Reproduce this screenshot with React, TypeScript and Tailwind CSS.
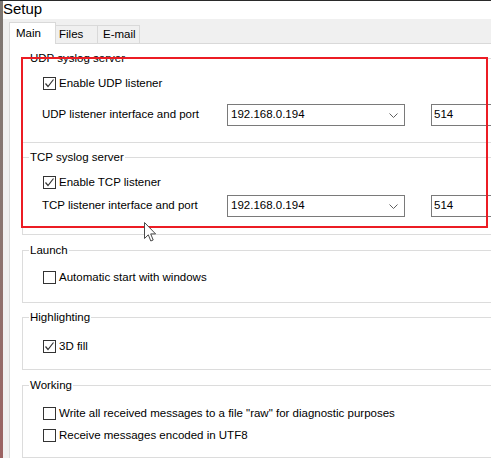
import React from 'react';

function Check({ checked = false }: { checked?: boolean }) {
  return (
    <span className="flex h-[13px] w-[13px] shrink-0 items-center justify-center border border-[#333333] bg-white">
      {checked && (
        <svg width="11" height="11" viewBox="0 0 11 11" fill="none">
          <polyline points="1.5,5.5 4,8.5 9.5,1.5" stroke="#333333" strokeWidth="1.2" />
        </svg>
      )}
    </span>
  );
}

function CheckRow({ label, checked, className = '' }: { label: string; checked?: boolean; className?: string }) {
  return (
    <div className={`flex h-[13px] items-center gap-[3px] ${className}`}>
      <Check checked={checked} />
      <span className="whitespace-nowrap">{label}</span>
    </div>
  );
}

function Group({ title, className = '', children }: { title: string; className?: string; children: React.ReactNode }) {
  return (
    <fieldset className={`ml-[12px] w-[500px] border border-[#dcdcdc] p-0 ${className}`}>
      <legend className="ml-[6px] px-[1px] leading-[14px]">{title}</legend>
      {children}
    </fieldset>
  );
}

function InterfaceRow({ label, className = '' }: { label: string; className?: string }) {
  return (
    <div className={`flex h-[22px] items-center ${className}`}>
      <span className="w-[184px] -ml-px whitespace-nowrap">{label}</span>
      <div className="ml-px flex h-[22px] w-[178px] items-center justify-between border border-[#7a7a7a] bg-white pl-[3px]">
        <span>192.168.0.194</span>
        <svg width="9" height="5" viewBox="0 0 9 5" fill="none" className="mr-[6px]">
          <polyline points="0.5,0.5 4.5,4.5 8.5,0.5" stroke="#606060" strokeWidth="1" />
        </svg>
      </div>
      <div className="ml-[26px] flex h-[22px] w-[90px] items-center border border-[#7a7a7a] bg-white pl-[2px]">
        <span>514</span>
      </div>
    </div>
  );
}

export default function App() {
  const tabs = [
    { name: 'Files', width: 'w-[42px]', pad: 'pl-[3px]' },
    { name: 'E-mail', width: 'w-[42px]', pad: 'pl-[5px]' },
  ];

  return (
    <div className="flex h-[458px] w-[491px] overflow-hidden border-t border-[#2a2a2a] bg-white font-['Liberation_Sans',Arial,sans-serif] text-[11.5px] text-black">
      <div className="w-[3px] shrink-0 bg-linear-to-b from-[#7d7772] via-[#8a7570] to-[#9b6262]" />

      <div className="flex min-w-0 flex-1 flex-col">
        <div className="h-[18px] bg-white text-[15px] leading-[16px]">Setup</div>

        <div className="flex flex-1 flex-col bg-[#f0f0f0] pl-[6px]">
          <div className="flex h-[24px] items-end">
            <div className="relative z-10 -mb-px flex h-[22px] w-[47px] items-center border border-b-0 border-[#d9d9d9] bg-white pl-[6px]">
              Main
            </div>
            {tabs.map((tab) => (
              <div
                key={tab.name}
                className={`flex h-[18px] items-center border-t border-r border-[#d9d9d9] bg-[#f0f0f0] ${tab.width} ${tab.pad}`}
              >
                {tab.name}
              </div>
            ))}
          </div>

          <div className="relative flex-1 border-t border-l border-[#d9d9d9] bg-white">
            <Group title="UDP syslog server" className="mt-[7px] pb-[16px]">
              <div className="pl-[20px] pt-[12px]">
                <CheckRow label="Enable UDP listener" checked />
                <InterfaceRow label="UDP listener interface and port" className="mt-[14px]" />
              </div>
            </Group>

            <Group title="TCP syslog server" className="mt-[7px] pb-[17px]">
              <div className="pl-[20px] pt-[12px]">
                <CheckRow label="Enable TCP listener" checked />
                <InterfaceRow label="TCP listener interface and port" className="mt-[6px]" />
              </div>
            </Group>

            <Group title="Launch" className="mt-[8px] pb-[18px]">
              <div className="pl-[20px] pt-[14px]">
                <CheckRow label="Automatic start with windows" />
              </div>
            </Group>

            <Group title="Highlighting" className="mt-[7px] pb-[16px]">
              <div className="pl-[20px] pt-[16px]">
                <CheckRow label="3D fill" checked />
              </div>
            </Group>

            <Group title="Working" className="mt-[8px] pb-[15px]">
              <div className="pl-[20px] pt-[15px]">
                <CheckRow label={'Write all received messages to a file "raw" for diagnostic purposes'} />
                <CheckRow label="Receive messages encoded in UTF8" className="mt-[9px]" />
              </div>
            </Group>

            {/* red annotation frame */}
            <div className="pointer-events-none absolute left-[11px] top-[13px] h-[171px] w-[467px] border-2 border-[#ec1c24]" />

            {/* mouse pointer */}
            <svg
              className="pointer-events-none absolute left-[134px] top-[178px]"
              width="13"
              height="21"
              viewBox="0 0 13 21"
            >
              <path
                d="M0.5 0.5 L0.5 16.5 L4.3 12.8 L6.8 19 L9.2 18 L6.7 11.9 L11.6 11.9 Z"
                fill="#ffffff"
                stroke="#4a4a4a"
                strokeWidth="1"
                strokeLinejoin="round"
              />
            </svg>
          </div>
        </div>
      </div>
    </div>
  );
}
